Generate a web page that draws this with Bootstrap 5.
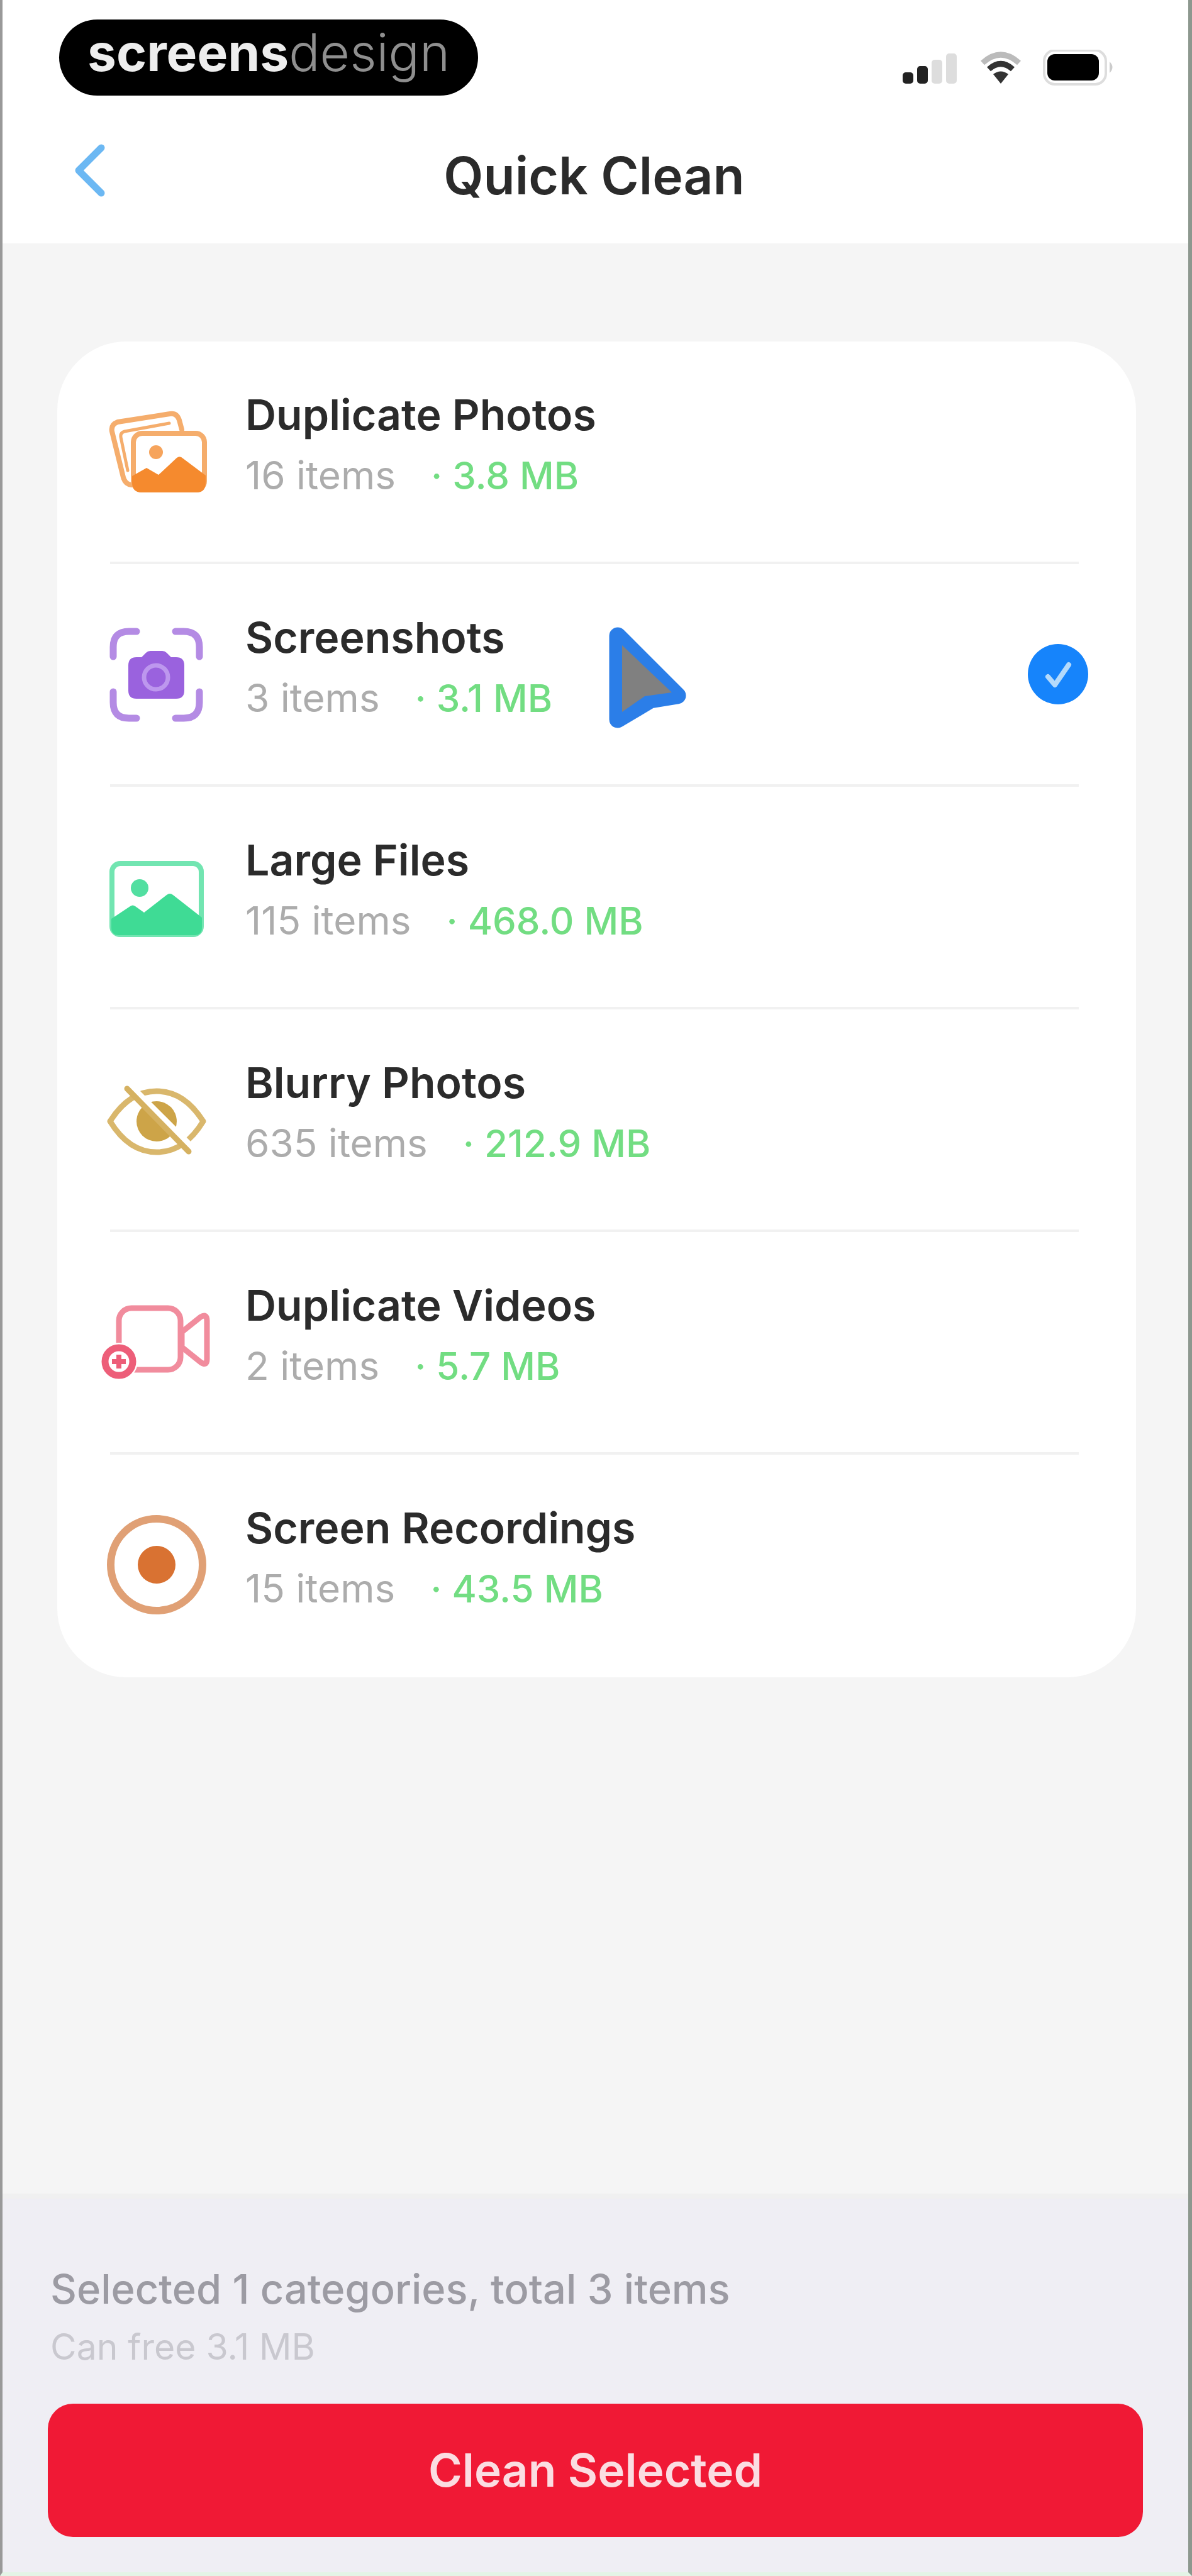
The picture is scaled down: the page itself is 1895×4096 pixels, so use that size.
<!DOCTYPE html>
<html lang="en">
<head>
<meta charset="utf-8">
<meta name="viewport" content="width=device-width, initial-scale=1">
<title>Quick Clean</title>
<link href="https://cdn.jsdelivr.net/npm/bootstrap@5.3.0/dist/css/bootstrap.min.css" rel="stylesheet">
<style>
  body { font-family: Inter, "Liberation Sans", sans-serif; background: #f5f5f5; color: #2b2b2b; }
  .screen { border-left: 4px solid #999; border-right: 6px solid #8d988f; border-bottom: 6px solid #e3f4e6; }
  .status-row { padding: 31px 116px 0 90px; }
  .brand-pill { background: #000; color: #ededed; height: 121px; padding: 0 45px 16px; font-size: 82px; line-height: 100px; }
  .brand-thin { color: #8f8f8f; font-weight: 300; }
  .title-bar { height: 235px; padding: 20px 112px 0 108px; }
  .title-bar h1 { font-size: 82px; line-height: 100px; font-weight: 600; }
  .side-slot { width: 60px; }
  .clean-list { margin: 156px 83px 0 87px; padding-bottom: 4px; border-radius: 110px; background: #fff; }
  .clean-row { height: 350px; padding: 0 76px 0 66px; gap: 51px; cursor: pointer; }
  .row-copy { padding-bottom: 20px; }
  .row-name { font-size: 68px; line-height: 96px; font-weight: 600; }
  .row-meta { font-size: 62px; line-height: 98px; gap: 56px; color: #acacac; }
  .row-size { color: #72dd82; font-size: 60px; font-weight: 500; }
  .row-line { height: 4px; margin: 0 91px 0 84px; background: #f1f1f1; border: 0; opacity: 1; }
  .row-check.form-check-input { width: 96px; height: 96px; margin: 0; border: 0; background-color: transparent; }
  .row-check.form-check-input:checked { background-color: #1684fb; background-size: 96px 96px; background-image: url("data:image/svg+xml,%3Csvg xmlns='http://www.w3.org/2000/svg' viewBox='0 0 96 96'%3E%3Cpath d='M32 52L43 65L65 33' fill='none' stroke='%23b4dafb' stroke-width='8' stroke-linecap='round' stroke-linejoin='round'/%3E%3C/svg%3E"); }
  .pointer { left: 51%; top: 97px; }
  .action-panel { background: #efeef4; border-top: 8px solid #f0f0f0; padding: 96px 72px 56px; }
  .sum-copy { padding-left: 4px; }
  .sum-main { font-size: 65px; line-height: 96px; color: #9c9ba3; font-weight: 500; }
  .sum-sub { font-size: 57px; line-height: 88px; color: #c9c8cf; }
  .clean-btn { height: 212px; margin-top: 46px; border: 0; border-radius: 40px; background: #f01935; color: #fbdde2; font-size: 73px; font-weight: 600; }
  .clean-btn:hover { background: #d9142e; color: #fff; }
</style>
</head>
<body>
<div class="screen min-vh-100 d-flex flex-column">
  <header class="bg-white">
    <div class="status-row d-flex justify-content-between align-items-start">
      <div class="brand-pill rounded-pill d-flex align-items-center"><span class="fw-bold">screens</span><span class="brand-thin">design</span></div>
      <svg width="344" height="72" viewBox="0 0 344 72" class="mt-5" aria-label="Signal, Wi-Fi and battery">
        <g transform="translate(2 -6)">
          <rect x="4" y="42" width="17" height="18" rx="5" fill="#222"/>
          <rect x="27" y="32" width="17" height="28" rx="5" fill="#222"/>
          <rect x="50" y="22" width="17" height="38" rx="5" fill="#ddd"/>
          <rect x="73" y="12" width="17" height="48" rx="5" fill="#ddd"/>
          <g fill="none" stroke="#333" stroke-width="9">
            <path d="M131 27 Q160 1 189 27" stroke="#bbb"/>
            <path d="M141 37 Q160 20 179 37"/>
          </g>
          <path d="M148 45 Q160 36 172 45 L160 60Z" fill="#333"/>
          <rect x="229" y="7" width="98" height="54" rx="17" fill="none" stroke="#ddd" stroke-width="4"/>
          <rect x="234" y="13" width="82" height="42" rx="12" fill="#000"/>
          <path d="M333 25 Q342 34 333 43Z" fill="#ccc"/>
        </g>
      </svg>
    </div>
    <nav class="title-bar d-flex justify-content-between align-items-center" aria-label="Page">
      <a href="#" class="side-slot" aria-label="Back">
        <svg width="60" height="110" viewBox="0 0 60 110"><path d="M49 10 L13 46 L49 82" fill="none" stroke="#6cb8f3" stroke-width="11" stroke-linecap="round" stroke-linejoin="round"/></svg>
      </a>
      <h1 class="m-0">Quick Clean</h1>
      <span class="side-slot"></span>
    </nav>
  </header>

  <main>
    <div class="clean-list">
      <label class="clean-row d-flex align-items-center" for="c1">
        <svg width="182" height="182" viewBox="0 0 182 182" class="flex-shrink-0" fill="none" stroke-linejoin="round">
          <path d="M52 144 Q42 143 39 132 L21 59 Q19 48 30 44 L113 31 Q124 29 128 41 L132 56" stroke="#f5ad6c" stroke-width="8" stroke-linecap="round"/>
          <path d="M46 121 L35 68 Q34 61 41 59 L112 46" stroke="#f5ad6c" stroke-width="5" stroke-linecap="round"/>
          <rect x="55" y="62" width="113" height="90" rx="14" fill="#fff" stroke="#f5ad6c" stroke-width="8"/>
          <path d="M53 130 L76 117 L95 128 L124 101 Q129 97 134 102 L170 129 V140 Q170 156 156 156 H68 Q53 156 53 140Z" fill="#f58a2e"/>
          <circle cx="91" cy="92" r="11" fill="#f6a45c"/>
        </svg>
        <span class="row-copy flex-grow-1"><span class="row-name d-block">Duplicate Photos</span><span class="row-meta d-flex"><span>16 items</span><span class="row-size">· 3.8 MB</span></span></span>
        <input class="form-check-input row-check rounded-circle" type="checkbox" id="c1">
      </label>
      <hr class="row-line">
      <div class="position-relative">
        <label class="clean-row d-flex align-items-center" for="c2">
          <svg width="182" height="182" viewBox="0 0 182 182" class="flex-shrink-0" fill="none">
            <path d="M23 63 V48 Q23 23 48 23 H60 M122 23 H135 Q160 23 160 48 V63 M160 119 V136 Q160 161 135 161 H122 M60 161 H48 Q23 161 23 136 V119" stroke="#b48be4" stroke-width="11" stroke-linecap="round"/>
            <path d="M60 64 H68 L75 57 Q78 54 82 54 H101 Q105 54 108 57 L115 64 H123 Q136 64 136 77 V117 Q136 130 123 130 H60 Q47 130 47 117 V77 Q47 64 60 64Z" fill="#9a62de"/>
            <circle cx="91" cy="96" r="19" stroke="#bd97ee" stroke-width="7"/>
          </svg>
          <span class="row-copy flex-grow-1"><span class="row-name d-block">Screenshots</span><span class="row-meta d-flex"><span>3 items</span><span class="row-size">· 3.1 MB</span></span></span>
          <input class="form-check-input row-check rounded-circle" type="checkbox" id="c2" checked>
        </label>
        <svg class="pointer position-absolute" width="130" height="168" viewBox="0 0 130 168" aria-hidden="true"><path d="M16 17 L111 112 L68 119 L16 150Z" fill="#2b7ee8" stroke="#2b7ee8" stroke-width="27" stroke-linejoin="round"/><path d="M23 32 L102 107 L59 113 L23 138Z" fill="#808080"/></svg>
      </div>
      <hr class="row-line">
      <label class="clean-row d-flex align-items-center" for="c3">
        <svg width="182" height="182" viewBox="0 0 182 182" class="flex-shrink-0">
          <rect x="21" y="38" width="142" height="113" rx="13" fill="none" stroke="#72e5b1" stroke-width="8"/>
          <path d="M20 126 L50 106 Q54 103 58 106 L72 116 L108 88 Q113 84 118 88 L164 124 V140 Q164 152 152 152 H32 Q20 152 20 140Z" fill="#3fdb95"/>
          <circle cx="65" cy="77" r="14" fill="#52dfa1"/>
        </svg>
        <span class="row-copy flex-grow-1"><span class="row-name d-block">Large Files</span><span class="row-meta d-flex"><span>115 items</span><span class="row-size">· 468.0 MB</span></span></span>
        <input class="form-check-input row-check rounded-circle" type="checkbox" id="c3">
      </label>
      <hr class="row-line">
      <label class="clean-row d-flex align-items-center" for="c4">
        <svg width="182" height="182" viewBox="0 0 182 182" class="flex-shrink-0" fill="none">
          <path d="M18 94 Q48 46 92 46 Q136 46 166 94 Q136 143 92 143 Q48 143 18 94Z" stroke="#d9b76c" stroke-width="9" stroke-linejoin="round"/>
          <circle cx="92" cy="94" r="32" fill="#cda448"/>
          <path d="M54 41 L150 137" stroke="#fff" stroke-width="10"/>
          <path d="M45 42 L143 142" stroke="#d5b161" stroke-width="9" stroke-linecap="round"/>
        </svg>
        <span class="row-copy flex-grow-1"><span class="row-name d-block">Blurry Photos</span><span class="row-meta d-flex"><span>635 items</span><span class="row-size">· 212.9 MB</span></span></span>
        <input class="form-check-input row-check rounded-circle" type="checkbox" id="c4">
      </label>
      <hr class="row-line">
      <label class="clean-row d-flex align-items-center" for="c5">
        <svg width="182" height="182" viewBox="0 0 182 182" class="flex-shrink-0" fill="none">
          <rect x="32" y="37" width="98" height="98" rx="20" stroke="#f18c9d" stroke-width="9"/>
          <path d="M132 75 L162 51 Q172 45 172 57 V118 Q172 130 162 123 L132 99Z" stroke="#f18c9d" stroke-width="9" stroke-linejoin="round"/>
          <circle cx="32" cy="122" r="30" fill="#fff"/>
          <circle cx="32" cy="122" r="22" fill="#fff" stroke="#ed5e79" stroke-width="11"/>
          <path d="M32 111 V133 M21 122 H43" stroke="#ed5e79" stroke-width="8"/>
        </svg>
        <span class="row-copy flex-grow-1"><span class="row-name d-block">Duplicate Videos</span><span class="row-meta d-flex"><span>2 items</span><span class="row-size">· 5.7 MB</span></span></span>
        <input class="form-check-input row-check rounded-circle" type="checkbox" id="c5">
      </label>
      <hr class="row-line">
      <label class="clean-row d-flex align-items-center" for="c6">
        <svg width="182" height="182" viewBox="0 0 182 182" class="flex-shrink-0">
          <circle cx="92" cy="91" r="73" fill="none" stroke="#e0a075" stroke-width="12"/>
          <circle cx="92" cy="91" r="30" fill="#d97232"/>
        </svg>
        <span class="row-copy flex-grow-1"><span class="row-name d-block">Screen Recordings</span><span class="row-meta d-flex"><span>15 items</span><span class="row-size">· 43.5 MB</span></span></span>
        <input class="form-check-input row-check rounded-circle" type="checkbox" id="c6">
      </label>
    </div>
  </main>

  <footer class="action-panel mt-auto">
    <div class="sum-copy">
      <p class="sum-main m-0">Selected 1 categories, total 3 items</p>
      <p class="sum-sub m-0">Can free 3.1 MB</p>
    </div>
    <button type="button" class="btn clean-btn w-100">Clean Selected</button>
  </footer>
</div>
<script src="https://cdn.jsdelivr.net/npm/bootstrap@5.3.0/dist/js/bootstrap.bundle.min.js"></script>
</body>
</html>
